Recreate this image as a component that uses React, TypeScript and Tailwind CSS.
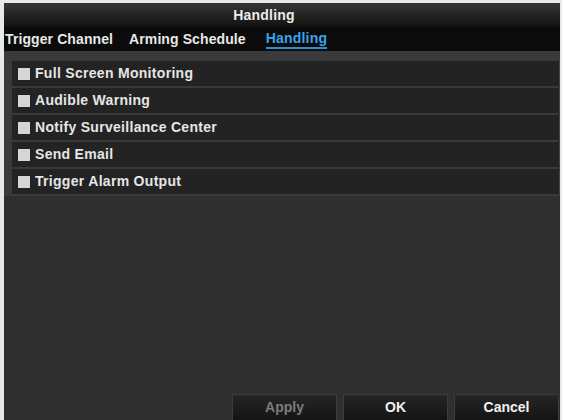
import type { ReactNode } from 'react';

const tabs = ['Trigger Channel', 'Arming Schedule', 'Handling'];
const activeTab = 'Handling';

const actions = [
  'Full Screen Monitoring',
  'Audible Warning',
  'Notify Surveillance Center',
  'Send Email',
  'Trigger Alarm Output',
];

function ActionRow({ label }: { label: string }) {
  return (
    <label className="flex h-[25px] items-center gap-[5px] border-r border-[#444] bg-[#232323] pl-[6px]">
      <span className="h-[12px] w-[12px] shrink-0 bg-[#d6d6d6]" />
      <span className="text-[14px] font-bold tracking-[0.3px] text-[#e6e6e6]">{label}</span>
    </label>
  );
}

function FooterButton({ children, disabled }: { children: ReactNode; disabled?: boolean }) {
  return (
    <button
      type="button"
      disabled={disabled}
      className={
        disabled
          ? 'h-[26px] w-[105px] border-t border-x border-[#3c3c3c] bg-gradient-to-b from-[#262626] to-[#141414] text-[14px] font-bold text-[#7c7c7c]'
          : 'h-[26px] w-[105px] border-t border-x border-[#3c3c3c] bg-gradient-to-b from-[#262626] to-[#141414] text-[14px] font-bold text-[#f0f0f0]'
      }
    >
      {children}
    </button>
  );
}

export default function App() {
  return (
    <div
      className="h-[420px] w-[562px] bg-[#e9e9e9] pl-[4px] pr-[2px] pt-[3px]"
      style={{ fontFamily: '"Liberation Sans", Arial, sans-serif' }}
    >
      <div className="flex h-full flex-col bg-[#2f2f2f]">
        <div className="flex h-[24px] items-center justify-center bg-gradient-to-b from-[#363636] to-[#121212] pr-[36px] text-[14px] font-bold tracking-[0.2px] text-[#ececec]">
          Handling
        </div>

        <div className="flex h-[24px] items-center gap-[16px] bg-[#0b0b0b] pl-[1px]">
          {tabs.map((tab) =>
            tab === activeTab ? (
              <span
                key={tab}
                className="ml-[4px] border-b-2 border-[#2f8fd6] text-[14px] font-bold leading-[18px] tracking-[0.2px] text-[#3aa4ea]"
              >
                {tab}
              </span>
            ) : (
              <span key={tab} className="text-[14px] font-bold tracking-[0.1px] text-[#e8e8e8]">
                {tab}
              </span>
            ),
          )}
        </div>

        <div className="h-[6px] bg-[#3a3a3a]" />

        <div className="flex flex-col gap-[2px] bg-[#3a3a3a] pb-[2px] pl-[8px] pt-[4px]">
          {actions.map((a) => (
            <ActionRow key={a} label={a} />
          ))}
        </div>

        <div className="flex-1 bg-[#2f2f2f]" />

        <div className="flex justify-end gap-[6px] bg-[#2f2f2f] pr-[1px]">
          <FooterButton disabled>Apply</FooterButton>
          <FooterButton>OK</FooterButton>
          <FooterButton>Cancel</FooterButton>
        </div>
      </div>
    </div>
  );
}
